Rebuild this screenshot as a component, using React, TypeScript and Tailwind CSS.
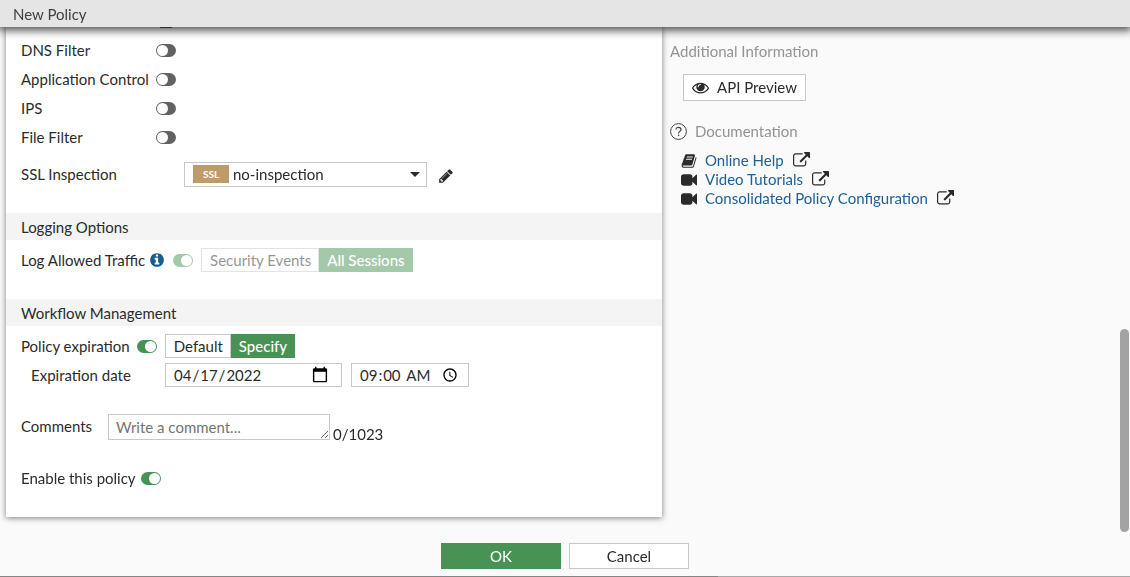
import { useState, type ReactNode } from "react";

const glyphs = {
  pencil:
    "M491 1536l91-91-235-235-91 91v107h128v128h107zm523-928q0-22-22-22-10 0-17 7l-542 542q-7 7-7 17 0 22 22 22 10 0 17-7l542-542q7-7 7-17zm-54-192l416 416-832 832h-416v-416zm683 96q0 53-37 90l-166 166-416-416 166-165q36-38 90-38 53 0 91 38l235 234q37 39 37 91z",
  info: "M1152 1376v-160q0-14-9-23t-23-9h-96v-512q0-14-9-23t-23-9h-320q-14 0-23 9t-9 23v160q0 14 9 23t23 9h96v320h-96q-14 0-23 9t-9 23v160q0 14 9 23t23 9h448q14 0 23-9t9-23zm-128-896v-160q0-14-9-23t-23-9h-192q-14 0-23 9t-9 23v160q0 14 9 23t23 9h192q14 0 23-9t9-23zm640 416q0 209-103 385.5t-279.5 279.5-385.5 103-385.5-103-279.5-279.5-103-385.5 103-385.5 279.5-279.5 385.5-103 385.5 103 279.5 279.5 103 385.5z",
  eye: "M1664 960q-152-236-381-353 61 104 61 225 0 185-131.5 316.5t-316.5 131.5-316.5-131.5-131.5-316.5q0-121 61-225-229 117-381 353 133 205 333.5 326.5t434.5 121.5 434.5-121.5 333.5-326.5zm-720-384q0-20-14-34t-34-14q-125 0-214.5 89.5t-89.5 214.5q0 20 14 34t34 14 34-14 14-34q0-86 61-147t147-61q20 0 34-14t14-34zm848 384q0 34-20 69-140 230-376.5 368.5t-499.5 138.5-499.5-139-376.5-368q-20-35-20-69t20-69q140-229 376.5-368t499.5-139 499.5 139 376.5 368q20 35 20 69z",
  book: "M1703 478q40 57 18 129l-275 906q-19 64-76.5 107.5t-122.5 43.5h-923q-77 0-148.5-53.5t-99.5-131.5q-24-67-2-127 0-4 3-27t4-37q1-8-3-21.5t-3-19.5q2-11 8-21t16.5-23.5 16.5-23.5q23-38 45-91.5t30-91.5q3-10 .5-30t-.5-28q3-11 17-28t17-23q21-36 42-92t25-90q1-9-2.5-32t.5-28q4-13 22-30.5t22-22.5q19-26 42.5-84.5t27.5-96.5q1-8-3-25.5t-2-26.5q2-8 9-18t18-23 17-21q8-12 16.5-30.5t15-35 16-36 19.5-32 26.5-23.5 36-11.5 47.5 5.5l-1 3q38-9 51-9h761q74 0 114 56t18 130l-274 906q-36 119-71.5 153.5t-128.5 34.5h-869q-27 0-38 15-11 16-1 43 24 70 144 70h923q29 0 56-15.5t35-41.5l300-987q7-22 5-57 38 15 59 43zm-1064 2q-4 13 2 22.5t20 9.5h608q13 0 25.5-9.5t16.5-22.5l21-64q4-13-2-22.5t-20-9.5h-608q-13 0-25.5 9.5t-16.5 22.5zm-83 256q-4 13 2 22.5t20 9.5h608q13 0 25.5-9.5t16.5-22.5l21-64q4-13-2-22.5t-20-9.5h-608q-13 0-25.5 9.5t-16.5 22.5z",
  video:
    "M1792 352v1088q0 42-39 59-13 5-25 5-27 0-45-19l-403-403v166q0 119-84.5 203.5t-203.5 84.5h-704q-119 0-203.5-84.5t-84.5-203.5v-704q0-119 84.5-203.5t203.5-84.5h704q119 0 203.5 84.5t84.5 203.5v165l403-402q18-19 45-19 12 0 25 5 39 17 39 59z",
  external:
    "M1408 928v320q0 119-84.5 203.5t-203.5 84.5h-832q-119 0-203.5-84.5t-84.5-203.5v-832q0-119 84.5-203.5t203.5-84.5h704q14 0 23 9t9 23v64q0 14-9 23t-23 9h-704q-66 0-113 47t-47 113v832q0 66 47 113t113 47h832q66 0 113-47t47-113v-320q0-14 9-23t23-9h64q14 0 23 9t9 23zm384-864v512q0 26-19 45t-45 19-45-19l-176-176-652 652q-10 10-23 10t-23-10l-114-114q-10-10-10-23t10-23l652-652-176-176q-19-19-19-45t19-45 45-19h512q26 0 45 19t19 45z",
};

function Glyph({ name, className }: { name: keyof typeof glyphs; className: string }) {
  return (
    <svg viewBox="0 0 1792 1792" fill="currentColor" aria-hidden="true" className={"shrink-0 " + className}>
      <path d={glyphs[name]} />
    </svg>
  );
}

function Toggle({ id, on = false, disabled = false }: { id: string; on?: boolean; disabled?: boolean }) {
  return (
    <input
      id={id}
      type="checkbox"
      defaultChecked={on}
      disabled={disabled}
      className="flex h-[13px] w-5 shrink-0 appearance-none items-center rounded-full bg-[#626262] p-px before:size-[11px] before:rounded-full before:bg-white checked:justify-end checked:bg-[#489256] disabled:opacity-50"
    />
  );
}

function Segments({
  name,
  label,
  options,
  initial,
  disabled = false,
}: {
  name: string;
  label: string;
  options: string[];
  initial: string;
  disabled?: boolean;
}) {
  const [value, setValue] = useState(initial);
  return (
    <div role="radiogroup" aria-label={label} className={disabled ? "flex opacity-50" : "flex"}>
      {options.map((o) => (
        <label
          key={o}
          className="relative flex h-6 items-center border border-[#c8c8c8] bg-white pr-[7px] pl-2 last:border-l-0 has-checked:border-[#489256] has-checked:bg-[#489256] has-checked:font-medium has-checked:text-white"
        >
          <input
            type="radio"
            name={name}
            checked={value === o}
            disabled={disabled}
            onChange={() => setValue(o)}
            className="absolute inset-0 appearance-none"
          />
          {o}
        </label>
      ))}
    </div>
  );
}

function SectionTitle({ children }: { children: ReactNode }) {
  return <h2 className="flex h-[27px] items-center bg-[#f4f4f4] px-[15px] pt-px">{children}</h2>;
}

const filters = [
  { id: "dns", label: "DNS Filter" },
  { id: "app", label: "Application Control" },
  { id: "ips", label: "IPS" },
  { id: "file", label: "File Filter" },
];

const docs: { label: string; icon: "book" | "video" }[] = [
  { label: "Online Help", icon: "book" },
  { label: "Video Tutorials", icon: "video" },
  { label: "Consolidated Policy Configuration", icon: "video" },
];

export default function App() {
  const [comment, setComment] = useState("");
  return (
    <div className="flex min-h-screen flex-col bg-[#fafafa] font-['Lato',sans-serif] text-[15px] leading-[19px] text-[#2b2b2b]">
      <header className="z-10 flex h-[27px] items-center bg-[#e5e5e5] px-[13px] pt-[2px] text-[#404040] shadow-[0_1px_10px_2px_rgba(0,0,0,0.75)]">
        <h1>New Policy</h1>
      </header>

      <div className="grid grow grid-cols-[656fr_458fr_10px] overflow-hidden pl-[6px]">
        <main className="self-start bg-white pb-6 shadow-[0_1px_6px_rgba(0,0,0,0.5)]">
          <div className="ml-[154px] h-px w-3 bg-[#626262]" />
          <div className="px-[15px] pt-2">
            {filters.map((f) => (
              <div key={f.id} className="flex h-[29px] items-center">
                <label htmlFor={f.id} className="w-[135px] whitespace-nowrap">
                  {f.label}
                </label>
                <Toggle id={f.id} />
              </div>
            ))}
          </div>

          <div className="mt-2 mb-6 flex h-[29px] items-center px-[15px]">
            <label htmlFor="ssl" className="w-[163px]">
              SSL Inspection
            </label>
            <div className="relative w-[243px]">
              <select
                id="ssl"
                className="block h-[25px] w-full appearance-none border border-[#c8c8c8] bg-white pl-12 leading-[19px]"
              >
                <option>no-inspection</option>
              </select>
              <span className="pointer-events-none absolute top-[3px] left-[9px] flex h-[18px] w-9 items-center justify-center bg-[#be9c69] text-[10px] font-bold text-white">
                SSL
              </span>
              <svg viewBox="0 0 10 5" aria-hidden="true" className="pointer-events-none absolute top-[10px] right-[7px] h-[5px] w-[10px]">
                <path d="M0 0h10L5 5z" fill="#2b2b2b" />
              </svg>
            </div>
            <button type="button" aria-label="Edit" className="ml-[11px] pt-[2px]">
              <Glyph name="pencil" className="size-4" />
            </button>
          </div>

          <SectionTitle>Logging Options</SectionTitle>
          <div className="mt-2 mb-[27px] flex h-6 items-center px-[15px]">
            <label htmlFor="log">Log Allowed Traffic</label>
            <Glyph name="info" className="ml-1 size-4 text-[#165d93]" />
            <div className="mr-2 ml-2">
              <Toggle id="log" on disabled />
            </div>
            <Segments
              name="log-mode"
              label="Log Allowed Traffic"
              options={["Security Events", "All Sessions"]}
              initial="All Sessions"
              disabled
            />
          </div>

          <SectionTitle>Workflow Management</SectionTitle>
          <div className="mt-2 flex h-6 items-center px-[15px]">
            <label htmlFor="expiry">Policy expiration</label>
            <div className="mr-2 ml-[7px]">
              <Toggle id="expiry" on />
            </div>
            <Segments name="expiry-mode" label="Policy expiration" options={["Default", "Specify"]} initial="Specify" />
          </div>
          <div className="mt-[5px] flex h-6 items-center pl-[25px]">
            <label htmlFor="date" className="w-[134px]">
              Expiration date
            </label>
            <input
              id="date"
              type="date"
              defaultValue="2022-04-17"
              className="h-6 w-[177px] border border-[#c8c8c8] bg-white pr-[10px] pl-[7px] [&::-webkit-calendar-picker-indicator]:size-[18px]"
            />
            <input
              type="time"
              aria-label="Expiration time"
              defaultValue="09:00"
              className="ml-[9px] h-6 w-[118px] border border-[#c8c8c8] bg-white pr-[7px] pl-[7px] [&::-webkit-calendar-picker-indicator]:ml-2"
            />
          </div>

          <div className="mt-[27px] flex h-[26px] px-[15px]">
            <label htmlFor="comments" className="w-[87px] pt-[3px]">
              Comments
            </label>
            <textarea
              id="comments"
              rows={1}
              maxLength={1023}
              value={comment}
              onChange={(e) => setComment(e.target.value)}
              placeholder="Write a comment..."
              className="h-[26px] w-[222px] border border-[#c8c8c8] bg-white px-[7px] py-[3px] placeholder:text-[#757575]"
            />
            <span className="ml-[3px] pt-[11px]">{comment.length}/1023</span>
          </div>

          <div className="mt-6 flex h-[29px] items-center gap-[5px] px-[15px]">
            <label htmlFor="enable">Enable this policy</label>
            <Toggle id="enable" on />
          </div>
        </main>

        <aside className="pt-[15px] pl-2">
          <h2 className="text-[#939393]">Additional Information</h2>
          <button type="button" className="mt-[13px] ml-[13px] flex h-[27px] items-center border border-[#c8c8c8] bg-white px-2">
            <Glyph name="eye" className="mr-2 size-[17px]" />
            API Preview
          </button>
          <h2 className="mt-[21px] flex items-center gap-2 text-[#939393]">
            <svg viewBox="0 0 17 17" fill="none" stroke="#404040" aria-hidden="true" className="size-[17px]">
              <circle cx="8.5" cy="8.5" r="7.9" />
              <path d="M6 6.6C6 5.1 7 4.3 8.5 4.3s2.5.9 2.5 2.2c0 1.9-2.4 1.9-2.4 4" strokeWidth="1.2" />
              <path d="M8.6 11.7v1.4" strokeWidth="1.3" />
            </svg>
            Documentation
          </h2>
          <ul className="mt-[10px] ml-[11px]">
            {docs.map((d) => (
              <li key={d.label} className="flex items-center">
                <Glyph name={d.icon} className="mr-2 size-4" />
                <a href="#" className="flex items-center text-[#1e6198]">
                  {d.label}
                  <Glyph name="external" className="ml-[9px] size-[17px] text-[#2b2b2b]" />
                </a>
              </li>
            ))}
          </ul>
        </aside>

        <div aria-hidden="true" className="flex flex-col pt-[302px]">
          <div className="h-[203px] w-[9px] rounded-full bg-[#a3a3a3]" />
        </div>
      </div>

      <footer className="-mt-[34px] flex justify-center gap-2 pb-[7px]">
        <button type="button" className="h-[26px] w-[120px] bg-[#489256] text-white">
          OK
        </button>
        <button type="button" className="h-[26px] w-[120px] border border-[#c8c8c8] bg-white">
          Cancel
        </button>
      </footer>
      <div aria-hidden="true" className="flex h-px">
        <div className="w-[63.5%] bg-[#858585]" />
        <div className="grow bg-[#a8a8a8]" />
      </div>
    </div>
  );
}
